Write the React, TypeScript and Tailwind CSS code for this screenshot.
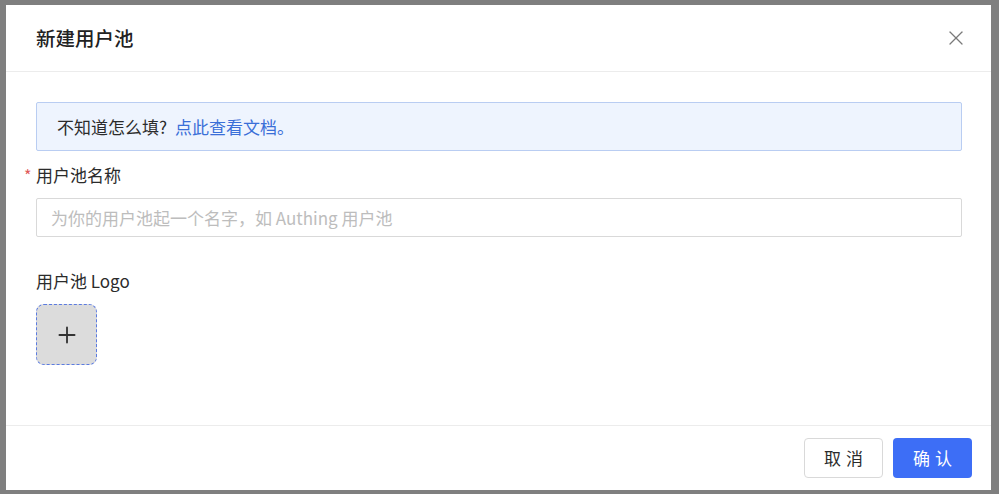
import { X, Plus } from "lucide-react";

const font = { fontFamily: '"Noto Sans CJK SC", "Noto Sans", sans-serif' };

export default function App() {
  return (
    <div className="w-[999px] h-[494px] bg-[#7f7f7f] pt-[5px] pl-[6px] pr-[8px] pb-[4px]" style={font}>
      <div className="h-full bg-white flex flex-col">
        <div className="h-[67px] shrink-0 flex items-center justify-between pl-[30px] pr-[23px] border-b border-[#ececec]">
          <h1 className="text-[19.5px] font-medium text-[#222]">新建用户池</h1>
          <X className="w-[24px] h-[24px] text-[#7a7a7a]" strokeWidth={1.3} />
        </div>

        <div className="flex-1 pt-[30px] pl-[30px] pr-[29px]">
          <div className="h-[49px] flex items-center px-[20px] bg-[#eef4fe] border border-[#b9cdf2] rounded-[2px] text-[17px] text-[#2b2b2b]">
            不知道怎么填?<span className="ml-[8px] text-[#3a6fd8]">点此查看文档。</span>
          </div>

          <div className="mt-[12px] h-[24px] flex items-center text-[17px] text-[#2b2b2b]">
            <span className="-ml-[12px] w-[12px] text-[#e05a5a] text-[16px]">*</span>
            用户池名称
          </div>

          <div className="mt-[11px] h-[39px] flex items-center px-[14px] border border-[#d9d9d9] rounded-[2px] text-[17px] text-[#bdbdbd]">
            为你的用户池起一个名字，如 Authing 用户池
          </div>

          <div className="mt-[32px] h-[24px] flex items-center text-[17px] text-[#2b2b2b]">用户池 Logo</div>

          <div className="mt-[11px] w-[61px] h-[61px] flex items-center justify-center bg-[#dcdcdc] border-[1.5px] border-dashed border-[#5b7be0] rounded-[8px]">
            <Plus className="w-[26px] h-[26px] text-[#333]" strokeWidth={1.7} />
          </div>
        </div>

        <div className="h-[65px] shrink-0 flex items-center justify-end gap-[10px] pr-[19px] border-t border-[#ececec]">
          <button className="w-[79px] h-[40px] border border-[#d9d9d9] rounded-[4px] bg-white text-[17px] text-[#2b2b2b] tracking-[5px] pl-[5px]">
            取消
          </button>
          <button className="w-[79px] h-[40px] rounded-[4px] bg-[#3d6ef6] text-[17px] text-white tracking-[5px] pl-[5px]">
            确认
          </button>
        </div>
      </div>
    </div>
  );
}
